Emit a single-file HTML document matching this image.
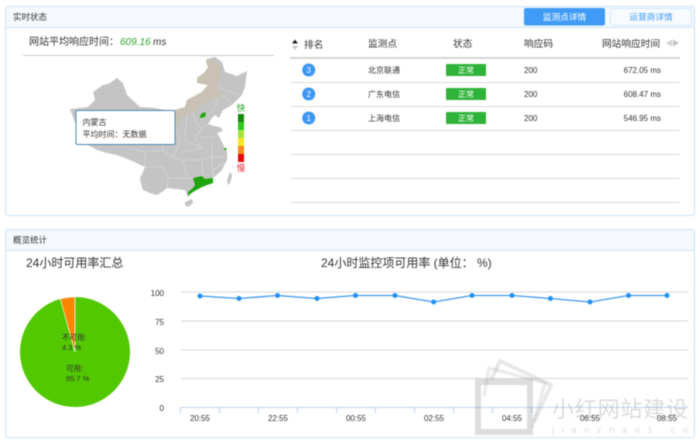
<!DOCTYPE html>
<html><head><meta charset="utf-8"><style>
html,body{margin:0;padding:0;background:#fff;width:700px;height:445px;overflow:hidden}
svg{display:block;filter:blur(.4px)}
text{font-family:"Liberation Sans","Noto Sans CJK SC",sans-serif;fill:#333}
</style></head><body>
<svg width="700" height="445" viewBox="0 0 700 445" xmlns="http://www.w3.org/2000/svg">
<!-- panel 1 -->
<rect x="5.500" y="6.500" width="689" height="209" rx="2" fill="#fff" stroke="#cbe3fb"/>
<path d="M6 27V8q0-1 1-1h686q1 0 1 1v19z" fill="#f5f9fd"/>
<line x1="6" y1="27.500" x2="694" y2="27.500" stroke="#cbe3fb"/>
<text x="13" y="20" font-size="8.500" fill="#444">实时状态</text>
<rect x="524" y="8" width="81" height="17.500" rx="2" fill="#3f9bf6"/>
<text x="564.500" y="20" font-size="8.700" text-anchor="middle" style="fill:#fff">监测点详情</text>
<rect x="610.500" y="8.500" width="81" height="17" rx="2" fill="#f8fbfe" stroke="#d3e7fb"/>
<text x="651" y="20" font-size="8.700" text-anchor="middle" style="fill:#3f9bf6">运营商详情</text>
<text x="29" y="45" font-size="10" fill="#333">网站平均响应时间：</text>
<text x="120" y="45" font-size="10" font-style="italic" style="fill:#2aa52a">609.16</text>
<text x="153" y="45" font-size="10" font-style="italic">ms</text>
<line x1="23" y1="55.500" x2="274" y2="55.500" stroke="#c8c8c8"/>
<!-- map -->
<path fill="#c4c4c4" d="M207 59L215 57L222 62L225 72L237 76L247 71L245 87L242 95L237 100L232 105L223 110L219 118L215 115L212 118L208 124L214 126L220 127L223 131L217 133L220 138L222 142L227 152L227 160L222 170L213 178L203 185L193 190L188 197L185 190L176 189L167 188L162 192L157 195L150 193L143 190L141 184L140 178L143 172L145 167L130 160L117 155L107 153L97 150L92 147L87 145L82 135L76 125L73 117L70 109L80 108L88 107L95 100L93 92L103 85L110 83L117 78L123 83L127 95L140 107L155 108L165 110L175 110L185 107L187 100L202 92L208 85L197 83L197 78L205 72L208 67L206 62Z"/>
<path fill="#c9c1b3" d="M207 59L215 60L220 65L220 73L217 87L222 95L218 98L210 100L202 105L193 112L187 115L180 118L176 127L175 110L185 107L187 100L202 92L208 85L197 83L197 78L205 72L208 67L206 62Z"/>
<g fill="none" stroke="#dcdcdc" stroke-width=".6">
<path d="M217 87L230 92L242 95M222 95L228 100L232 105M218 98L212 112M193 112L195 122L202 128L208 124M187 115L185 135L185 140L202 148L195 138L202 128M202 137L217 137M212 138L212 150L212 157M180 153L202 148M173 158L183 160L202 160L212 157L223 157M176 127L180 142L173 157M130 148L145 152L145 167L163 167L168 178L167 188M168 178L187 178L183 160M202 160L203 178M212 157L213 178M213 170L225 163M145 152L162 150L173 157M162 150L165 140L176 127M187 178L193 178"/>
</g>
<path fill="#c4c4c4" d="M230 172L232 175L231 180L229 185L227 182L228 177Z"/>
<path fill="#c4c4c4" d="M185 202L192 199L193 203L188 207L185 205Z"/>
<circle cx="233" cy="167" r=".6" fill="#ccc"/>
<path fill="#1ea50c" d="M193 178L202 176L205 179L213 178L213 183L207 185L202 187L193 192L189 195L188 197L188 192L193 188L195 185Z"/>
<path fill="#1ea50c" d="M202 113L206 112.500L205 117L200 118L200 116Z"/>
<rect x="224.500" y="148" width="2" height="2" fill="#1ea50c"/>
<!-- legend -->
<text x="241" y="111" font-size="8.500" text-anchor="middle" style="fill:#1ea51e">快</text>
<rect x="238" y="114" width="6" height="8" fill="#128a0a"/>
<rect x="238" y="122" width="6" height="8" fill="#2ecb1f"/>
<rect x="238" y="130" width="6" height="8" fill="#a4e43c"/>
<rect x="238" y="138" width="6" height="8" fill="#f5e61e"/>
<rect x="238" y="146" width="6" height="8" fill="#f58a14"/>
<rect x="238" y="154" width="6" height="8" fill="#e80808"/>
<text x="241" y="171" font-size="8.500" text-anchor="middle" style="fill:#e8283c">慢</text>
<!-- tooltip -->
<rect x="76" y="110.500" width="99" height="34" rx="1.500" fill="#fff" stroke="#4a8ab8" stroke-width="1"/>
<text x="82.500" y="125" font-size="8" fill="#444">内蒙古</text>
<text x="82.500" y="137" font-size="8" fill="#444">平均时间：无数据</text>
<!-- table -->
<polygon points="292,43.500 295,39.500 298,43.500" fill="#222"/>
<polygon points="292,46 295,50 298,46" fill="#c4c4c4"/>
<g font-size="9.700" fill="#444">
<text x="304" y="48">排名</text><text x="368" y="47">监测点</text><text x="453" y="47">状态</text><text x="524" y="47">响应码</text><text x="602" y="47">网站响应时间</text>
</g>
<polygon points="666,43 672,39.500 672,46.500" fill="#d0d0d0"/>
<polygon points="673,39.500 679,43 673,46.500" fill="#c4c4c4"/>
<rect x="290" y="57" width="390" height="2" fill="#d4d4d4"/>
<g stroke="#dadada"><line x1="290" y1="82.500" x2="680" y2="82.500"/><line x1="290" y1="106.500" x2="680" y2="106.500"/><line x1="290" y1="130.500" x2="680" y2="130.500"/><line x1="290" y1="154.500" x2="680" y2="154.500"/><line x1="290" y1="178.500" x2="680" y2="178.500"/><line x1="290" y1="202.500" x2="680" y2="202.500"/></g>
<g fill="#3c97f4"><circle cx="308.700" cy="70" r="6.500"/><circle cx="308.700" cy="94" r="6.500"/><circle cx="308.700" cy="118" r="6.500"/></g>
<g font-size="8" text-anchor="middle"><text x="308.700" y="73" style="fill:#fff">3</text><text x="308.700" y="97" style="fill:#fff">2</text><text x="308.700" y="121" style="fill:#fff">1</text></g>
<g font-size="8" fill="#444"><text x="368" y="73">北京联通</text><text x="368" y="97">广东电信</text><text x="368" y="121">上海电信</text>
<text x="524" y="73">200</text><text x="524" y="97">200</text><text x="524" y="121">200</text>
<g text-anchor="end"><text x="661" y="73">672.05 ms</text><text x="661" y="97">608.47 ms</text><text x="661" y="121">546.95 ms</text></g></g>
<g fill="#2fb338"><rect x="446" y="64" width="40" height="12" rx="1"/><rect x="446" y="88" width="40" height="12" rx="1"/><rect x="446" y="112" width="40" height="12" rx="1"/></g>
<g font-size="8" text-anchor="middle"><text x="466" y="73" style="fill:#fff">正常</text><text x="466" y="97" style="fill:#fff">正常</text><text x="466" y="121" style="fill:#fff">正常</text></g>
<!-- panel 2 -->
<rect x="5.500" y="229.500" width="689" height="208" rx="2" fill="#fff" stroke="#cbe3fb"/>
<path d="M6 250V231q0-1 1-1h686q1 0 1 1v19z" fill="#f5f9fd"/>
<line x1="6" y1="250.500" x2="694" y2="250.500" stroke="#cbe3fb"/>
<text x="13" y="243" font-size="8.500" fill="#444">概览统计</text>
<text x="26" y="267" font-size="12">24小时可用率汇总</text>
<text x="321" y="267" font-size="12">24小时监控项可用率 (单位： %)</text>
<!-- pie -->
<circle cx="75" cy="352" r="55" fill="#52c800"/>
<path d="M75 352L60.300 299A55 55 0 0 1 75 297Z" fill="#fb8500" stroke="#eef6e0" stroke-width=".7"/>
<line x1="75" y1="297" x2="75" y2="352" stroke="#e8f2dc" stroke-width=".8"/>
<g font-size="7.500" style="fill:#333">
<text x="62" y="340">不可用:</text><text x="62" y="350">4.3 %</text>
<text x="66" y="371">可用:</text><text x="66" y="381">95.7 %</text>
</g>
<!-- chart -->
<g stroke="#d8d8d8"><line x1="181" y1="292" x2="688" y2="292"/><line x1="181" y1="321" x2="688" y2="321"/><line x1="181" y1="350" x2="688" y2="350"/><line x1="181" y1="378.500" x2="688" y2="378.500"/></g>
<line x1="181" y1="407.500" x2="688" y2="407.500" stroke="#c0d4ea"/>
<path stroke="#c0d4ea" fill="none" d="M180.500 407v6M219.500 407v6M258.500 407v6M297.500 407v6M336.500 407v6M375.500 407v6M414.500 407v6M453.500 407v6M492.500 407v6M531.500 407v6"/>
<g font-size="8" fill="#555" text-anchor="end">
<text x="164" y="296">100</text><text x="164" y="325">75</text><text x="164" y="354">50</text><text x="164" y="382">25</text><text x="164" y="411">0</text></g>
<g font-size="8" fill="#555" text-anchor="middle">
<text x="200" y="421">20:55</text><text x="278" y="421">22:55</text><text x="356" y="421">00:55</text><text x="434" y="421">02:55</text><text x="512" y="421">04:55</text><text x="590" y="421">06:55</text><text x="667" y="421">08:55</text></g>
<polyline fill="none" stroke="#3c97ee" stroke-width="1.300" points="200,296 239,298.500 277.500,295.500 317,298.500 355.500,295.500 395,295.500 433.700,302 472,295.500 512,295.500 550.500,298.500 590,302 628.500,295.500 667,295.500"/>
<g fill="#2291f0"><circle cx="200" cy="296" r="2.500"/><circle cx="239" cy="298.500" r="2.500"/><circle cx="277.500" cy="295.500" r="2.500"/><circle cx="317" cy="298.500" r="2.500"/><circle cx="355.500" cy="295.500" r="2.500"/><circle cx="395" cy="295.500" r="2.500"/><circle cx="433.700" cy="302" r="2.500"/><circle cx="472" cy="295.500" r="2.500"/><circle cx="512" cy="295.500" r="2.500"/><circle cx="550.500" cy="298.500" r="2.500"/><circle cx="590" cy="302" r="2.500"/><circle cx="628.500" cy="295.500" r="2.500"/><circle cx="667" cy="295.500" r="2.500"/></g>
<!-- watermark -->
<g fill="none" stroke="#8a8a8a" stroke-opacity=".28">
<rect x="478" y="382" width="52" height="50" stroke-width="6"/>
<path d="M484 396L489 368L545 383L532 428" stroke-width="3.500" stroke-opacity=".16"/>
<path d="M491 380L500 361L551 385L534 422" stroke-width="4" stroke-opacity=".2"/>
</g>
<text x="552" y="417" font-size="22" textLength="136" lengthAdjust="spacing" style="fill:#8a8a8a;fill-opacity:.3">小红网站建设</text>
<text x="552" y="433" font-size="9.500" textLength="136" lengthAdjust="spacing" style="fill:#8a8a8a;fill-opacity:.3">jianzhan1.cn</text>
</svg>
</body></html>
